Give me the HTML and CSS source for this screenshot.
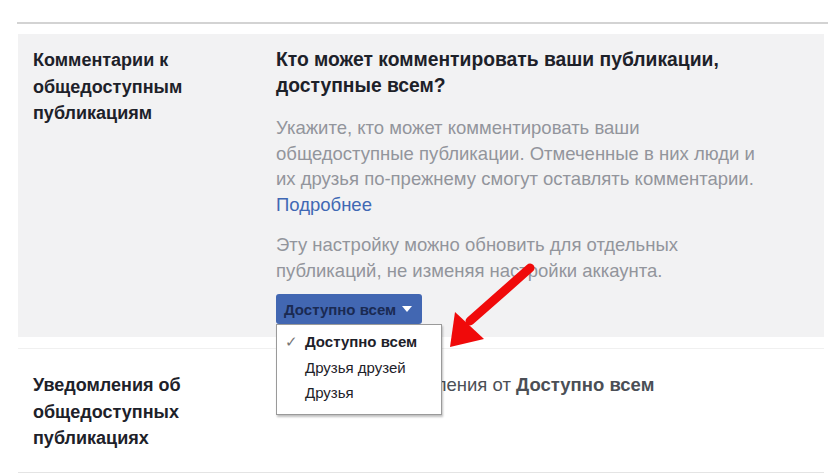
FILE: index.html
```html
<!DOCTYPE html>
<html lang="ru">

<head>
    <meta charset="UTF-8">
    <meta name="viewport" content="width=device-width, initial-scale=1.0">
    <title>Настройки публикаций</title>
    <link rel="stylesheet" href="styles.css">
</head>

<body>
    <!-- верхняя линия -->
    <div class="topline"></div>

    <!-- строка: комментарии -->
    <div class="row active">
        <div class="label">Комментарии к общедоступным публикациям</div>
        <div class="content">
            <h3 class="question">Кто может комментировать ваши публикации, доступные всем?</h3>
            <p class="desc">Укажите, кто может комментировать ваши общедоступные публикации. Отмеченные в них люди и их друзья по-прежнему смогут оставлять комментарии. <a href="#">Подробнее</a></p>
            <p class="desc">Эту настройку можно обновить для отдельных публикаций, не изменяя настройки аккаунта.</p>
            <!-- выбор аудитории -->
            <div class="select">
                <button class="selbtn">Доступно всем <span class="caret"></span></button>
                <ul class="menu">
                    <li class="on"><span class="check">✓</span>Доступно всем</li>
                    <li>Друзья друзей</li>
                    <li>Друзья</li>
                </ul>
            </div>
            <!-- красная стрелка -->
            <svg class="arrow" width="110" height="100" viewBox="0 0 110 100">
                <line x1="100" y1="5" x2="40" y2="58" stroke="#f00a0a" stroke-width="9" stroke-linecap="round" />
                <polygon points="20,84 25,49 54,76" fill="#f00a0a" />
            </svg>
        </div>
    </div>

    <!-- строка: уведомления -->
    <div class="row">
        <div class="label">Уведомления об общедоступных публикациях</div>
        <div class="content">
            <p class="value">Получайте уведомления от <b>Доступно всем</b></p>
        </div>
    </div>
</body>

</html>
```

FILE: styles.css
```css
html,
body {
    margin: 0;
    padding: 0;
}

body {
    background: #fff;
    font-family: "Liberation Sans", Arial, sans-serif;
    color: #1d2129;
}

/* верхняя линия */
.topline {
    margin: 22px 0 0 17px;
    border-top: 2px solid #d3d3d3;
}

/* строки настроек */
.row {
    display: flex;
    margin: 0 4px 0 18px;
    padding: 23px 0 20px 15px;
    border-top: 1px solid #f0f0f0;
    border-bottom: 1px solid #e4e4e4;
}

.row.active {
    margin-top: 10px;
    margin-bottom: 11px;
    padding: 13px 0 13px 15px;
    background: #f2f2f3;
    border: 0;
}

.label {
    width: 243px;
    flex: none;
    font-size: 18px;
    font-weight: bold;
    line-height: 26.5px;
}

.content {
    position: relative;
    width: 495px;
}

.question {
    margin: 0;
    font-size: 19.3px;
    line-height: 26px;
}

.desc {
    margin: 16px 0 0;
    font-size: 18.5px;
    line-height: 25.5px;
    color: #92959c;
}

.desc + .desc {
    margin-top: 15px;
}

.desc a {
    color: #4068b4;
    text-decoration: none;
}

.value {
    margin: 0;
    font-size: 18.5px;
    line-height: 26px;
    color: #4b4f56;
}

/* выбор аудитории */
.select {
    position: relative;
    margin-top: 11px;
}

.selbtn {
    display: inline-flex;
    align-items: center;
    gap: 6px;
    height: 30px;
    padding: 0 10px 0 8px;
    border: 0;
    border-radius: 3px;
    background: #4267b2;
    color: #1a2a52;
    font-family: inherit;
    font-size: 15px;
    font-weight: bold;
}

.caret {
    width: 0;
    height: 0;
    border-left: 5px solid transparent;
    border-right: 5px solid transparent;
    border-top: 6px solid #fff;
}

.menu {
    position: absolute;
    top: 30px;
    left: 0;
    z-index: 2;
    width: 136px;
    margin: 0;
    padding: 4px 0 8px 28px;
    list-style: none;
    background: #fff;
    border: 1px solid #9a9a9a;
    box-shadow: 1px 2px 2px rgba(0, 0, 0, 0.25);
    font-size: 15px;
    line-height: 25.5px;
    color: #1d2129;
}

.menu li {
    position: relative;
}

.menu li.on {
    font-weight: bold;
}

.check {
    position: absolute;
    left: -20px;
    font-weight: normal;
    color: #777;
}

/* стрелка */
.arrow {
    position: absolute;
    left: 154px;
    top: 216px;
    z-index: 3;
}
```
